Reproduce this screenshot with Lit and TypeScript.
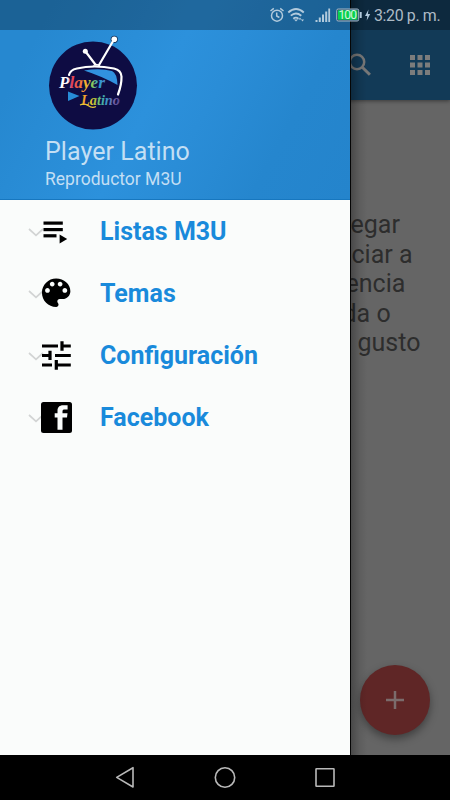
import { LitElement, html, css, svg } from "lit";
import { customElement } from "lit/decorators.js";

const icons = {
  list: svg`<g fill="#000"><rect x="43.500" y="221.500" width="19.300" height="3.200"/><rect x="43.500" y="228" width="19.300" height="3.200"/><rect x="43.500" y="234.200" width="13" height="3.200"/><path d="M59.600 234.400v9.200l7.600-4.600z"/></g>`,
  palette: svg`<path transform="translate(37.200 273.800) scale(1.580)" fill="#000" d="M12 3c-4.97 0-9 4.03-9 9s4.03 9 9 9c.83 0 1.500-.67 1.500-1.500 0-.39-.15-.74-.39-1.010-.23-.26-.38-.61-.38-.99 0-.83.67-1.500 1.500-1.500H16c2.760 0 5-2.240 5-5 0-4.420-4.030-8-9-8zm-5.500 9c-.83 0-1.500-.67-1.500-1.500S5.670 9 6.500 9 8 9.670 8 10.500 7.330 12 6.500 12zm3-4C8.670 8 8 7.330 8 6.500S8.670 5 9.500 5s1.500.67 1.500 1.500S10.330 8 9.500 8zm5 0c-.83 0-1.500-.67-1.500-1.500S13.670 5 14.500 5s1.500.67 1.500 1.500S15.330 8 14.500 8zm3 4c-.83 0-1.500-.67-1.500-1.500S16.670 9 17.500 9s1.500.67 1.500 1.500-.67 1.500-1.500 1.500z"/>`,
  tune: svg`<path fill="none" stroke="#000" stroke-width="3.200" d="M42 346h16M62 341.300v9.400M62 346h8.800M42 355.500h8M50 350.700v9.400M55 355.500h15.800M42 365h10M56.300 360v9.700M56.300 365h14.500"/>`,
  facebook: svg`<rect x="41" y="402" width="31" height="31" rx="2.500" fill="#000"/><path fill="#fafcfb" d="M57.500 429.800v-12.300h-2.800v-4.300h2.800v-2.400c0-3.400 1.900-5.500 5.600-5.500h4.500v4.300h-2.900c-1.600 0-2.200.6-2.200 1.900v1.700h5l-.5 4.300h-4.500v12.300z"/>`,
};

const entries = [
  { label: "Listas M3U", icon: icons.list, top: 200 },
  { label: "Temas", icon: icons.palette, top: 262 },
  { label: "Configuración", icon: icons.tune, top: 324 },
  { label: "Facebook", icon: icons.facebook, top: 386 },
];

@customElement("app-root")
export class AppRoot extends LitElement {
  static styles = css`
    :host { display: block; width: 450px; height: 800px; overflow: hidden; font-family: Roboto, sans-serif; }
    .screen { position: relative; display: flex; flex-direction: column; height: 800px; background: #656565; }
    .status { position: absolute; inset: 0 0 auto 0; z-index: 3; height: 30px; display: flex; justify-content: flex-end; align-items: center; background: rgba(0, 0, 0, 0.28); }
    .status svg { display: block; flex: none; }
    .time { width: 77px; box-sizing: border-box; padding: 1px 0 0 1px; font-size: 15.900px; letter-spacing: -0.350px; line-height: 30px; color: #adbbc6; white-space: nowrap; }
    .toolbar { box-sizing: border-box; height: 100px; flex: none; padding: 30px 18px 0 0; display: flex; align-items: center; justify-content: flex-end; gap: 36px; background: #123a57; box-shadow: 0 1px 4px rgba(0, 0, 0, 0.45); z-index: 1; }
    .content { flex: 1; display: flex; flex-direction: column; padding: 110px 0 0 350px; color: #2d2d2d; font-size: 25px; line-height: 29.500px; }
    .line { height: 29.500px; white-space: nowrap; }
    .inset { padding-left: 7.500px; }
    .inset-s { padding-left: 1.500px; }
    .inset-xs { padding-left: 0.500px; }
    .outset { margin-left: -7.500px; }
    .outset-s { margin-left: -4.500px; }
    .fab { position: absolute; left: 360px; top: 665px; width: 70px; height: 70px; border-radius: 50%; background: #5f2626; box-shadow: 0 4px 9px rgba(0, 0, 0, 0.38); display: grid; place-items: center; }
    .drawer { position: absolute; left: 0; top: 0; width: 350px; height: 755px; z-index: 2; background: #fafcfb; border-right: 1px solid #050505; }
    .shade { position: absolute; left: 351px; top: 0; width: 16px; height: 755px; z-index: 2; background: linear-gradient(90deg, rgba(0, 0, 0, 0.28), rgba(0, 0, 0, 0.08) 55%, transparent); }
    .header { box-sizing: border-box; height: 200px; padding: 34px 0 0 45px; border-bottom: 1px solid #1777bf; background: linear-gradient(118deg, #2688d0 0%, #2688d0 12%, #2c91dc 45%, #2a8dd7 58%, #2586ce 78%, #2484cc 100%); color: #c3dff4; }
    .logo { display: block; }
    .title { font-size: 25px; line-height: 30px; height: 30px; margin-top: 3px; letter-spacing: 0.050px; }
    .subtitle { font-size: 17.500px; line-height: 24px; }
    .menu { display: flex; flex-direction: column; }
    .entry { height: 62px; display: flex; align-items: center; color: #198adb; font-size: 25px; font-weight: 700; }
    .entry svg { flex: none; display: block; }
    .nav { height: 45px; flex: none; background: #000; }
    .nav svg { display: block; }
  `;

  render() {
    return html`
      <div class="screen">
        <div class="toolbar">
          <svg width="26" height="30" viewBox="346 50 26 30" fill="none" stroke="#787878" stroke-width="2.500"><circle cx="357" cy="62" r="7.200"/><path d="M362.500 67.500l7.400 7.300" stroke-width="3"/></svg>
          <svg width="24" height="30" viewBox="408 50 24 30" fill="#7c7c7c">
            ${[0, 1, 2].map((r) => [0, 1, 2].map((c) => svg`<rect x=${410 + c * 7.5} y=${55 + r * 7.5} width="5" height="5"/>`))}
          </svg>
        </div>
        <div class="content">
          <div class="line inset-xs">egar</div>
          <div class="line inset-s">ciar a</div>
          <div class="line outset-s">encia</div>
          <div class="line outset">da o</div>
          <div class="line inset">gusto</div>
        </div>
        <div class="fab"><svg width="20" height="20" viewBox="0 0 20 20" stroke="#7b6c6c" stroke-width="2.500"><path d="M1 10h18M10 1v18"/></svg></div>
        <div class="shade"></div>
        <div class="drawer">
          <div class="header">
            <svg class="logo" width="100" height="100" viewBox="45 34 100 100">
              <defs>
                <linearGradient id="top" gradientUnits="userSpaceOnUse" x1="58" x2="105" y1="0" y2="0"><stop offset="0" stop-color="#fff"/><stop offset=".2" stop-color="#fff"/><stop offset=".29" stop-color="#e03c58"/><stop offset=".46" stop-color="#ef6a42"/><stop offset=".6" stop-color="#f5b52d"/><stop offset=".73" stop-color="#8bc95a"/><stop offset=".87" stop-color="#299dcf"/><stop offset="1" stop-color="#4d8bd5"/></linearGradient>
                <linearGradient id="low" gradientUnits="userSpaceOnUse" x1="80" x2="121" y1="0" y2="0"><stop offset="0" stop-color="#ef872d"/><stop offset=".24" stop-color="#f5c42d"/><stop offset=".38" stop-color="#aac43f"/><stop offset=".52" stop-color="#49b89a"/><stop offset=".66" stop-color="#3b91cb"/><stop offset=".83" stop-color="#765fa5"/><stop offset="1" stop-color="#4f4088"/></linearGradient>
              </defs>
              <circle cx="93" cy="85.500" r="44" fill="#0e0c43"/>
              <path d="M84 70.500q16-2.500 28 .5 5 2 5.500 14-16-9-33.500-14.500z" fill="#3191df"/>
              <path d="M68 91.500v9.500l11.500-5z" fill="#278cd8"/>
              <circle cx="114.300" cy="39.300" r="3.600" fill="#15325a"/>
              <g fill="none" stroke="#fff" stroke-linecap="round"><path d="M69 75q1-5 8-6.500 17-4 37 0 7 1.500 7.500 8 .2 8-3.500 18" stroke-width="2.200"/><path d="M85.500 51.500l9.500 12.500M114 39.500L99 65" stroke-width="2.200"/></g>
              <circle cx="85.300" cy="51.300" r="2.500" fill="#fff"/><circle cx="114.300" cy="39.300" r="2.800" fill="#fff"/><path d="M92.500 65.800q3.500-4 8 0z" fill="#fff"/>
              <g font-family="Liberation Serif, serif" font-style="italic">
                <text x="59" y="88" font-size="16" font-weight="700" textLength="46" lengthAdjust="spacingAndGlyphs" fill="url(#top)">Player</text>
                <text x="81" y="105" font-size="15" font-weight="700" textLength="39" lengthAdjust="spacingAndGlyphs" fill="url(#low)">Latino</text>
              </g>
              <path d="M80 105q4-2 8 .5 4 3 8 1" fill="none" stroke="#e6c535" stroke-width="1.300"/>
            </svg>
            <div class="title">Player Latino</div>
            <div class="subtitle">Reproductor M3U</div>
          </div>
          <div class="menu">
            ${entries.map((e) => html`
              <div class="entry">
                <svg width="100" height="62" viewBox="0 ${e.top} 100 62">
                  <path d="M29 ${e.top + 29}l7 6.300 7-6.300" fill="none" stroke="#d2d4d4" stroke-width="1.700"/>
                  ${e.icon}
                </svg>
                <span>${e.label}</span>
              </div>`)}
          </div>
        </div>
        <div class="status">
          <svg width="103" height="30" viewBox="270 0 103 30">
            <g fill="none" stroke="#b2cadc" stroke-width="1.500">
              <circle cx="277" cy="15.700" r="5.500"/><path d="M276.700 12.500v3.500l2.700 1.500M270.500 11l3.300-2.700M280.200 8.300l3.300 2.700"/>
              <path d="M288.300 12.500q7.700-7 15.500 0M290.800 15.700q5-4.500 10.500 0M293.300 18.700q2.500-2 5.200 0" stroke-width="1.800"/>
            </g>
            <path d="M294 19.500h4l-2 2zM298.500 19.500l1.500-2 1.500 2zM301 19.500h3l-1.500 2z" fill="#b2cadc"/>
            <g fill="#b2cadc"><path d="M315.500 20h2v2h-2zM318.800 17.500h2v4.500h-2zM322 14.500h2v7.500h-2zM325.200 11.500h2v10.500h-2zM328.300 8.500h1.800v13.500h-1.800zM359.700 12h2v6h-2z"/><path d="M368.500 9.500l-3.500 6.500h2.300l-.6 4.500 3.500-6.500h-2.300z"/></g>
            <rect x="336.700" y="9" width="22" height="12" rx="1.500" fill="#244e70" stroke="#a7b7c4" stroke-width="1"/>
            <rect x="338" y="10.300" width="19.400" height="9.400" fill="#08d34b"/>
            <text x="347.700" y="19.200" text-anchor="middle" font-family="Roboto, sans-serif" font-size="12" fill="#d5f4e1" textLength="18.500">100</text>
          </svg>
          <span class="time">3:20 p. m.</span>
        </div>
        <div class="nav">
          <svg width="450" height="45" viewBox="0 755 450 45" fill="none" stroke="#b9b9b9" stroke-width="1.600" stroke-linejoin="round"><path d="M133 767.700v19.300l-16.300-9.600z"/><circle cx="225" cy="777.500" r="9.700"/><rect x="316" y="768.700" width="18" height="17.600" rx=".5"/></svg>
        </div>
      </div>`;
  }
}
